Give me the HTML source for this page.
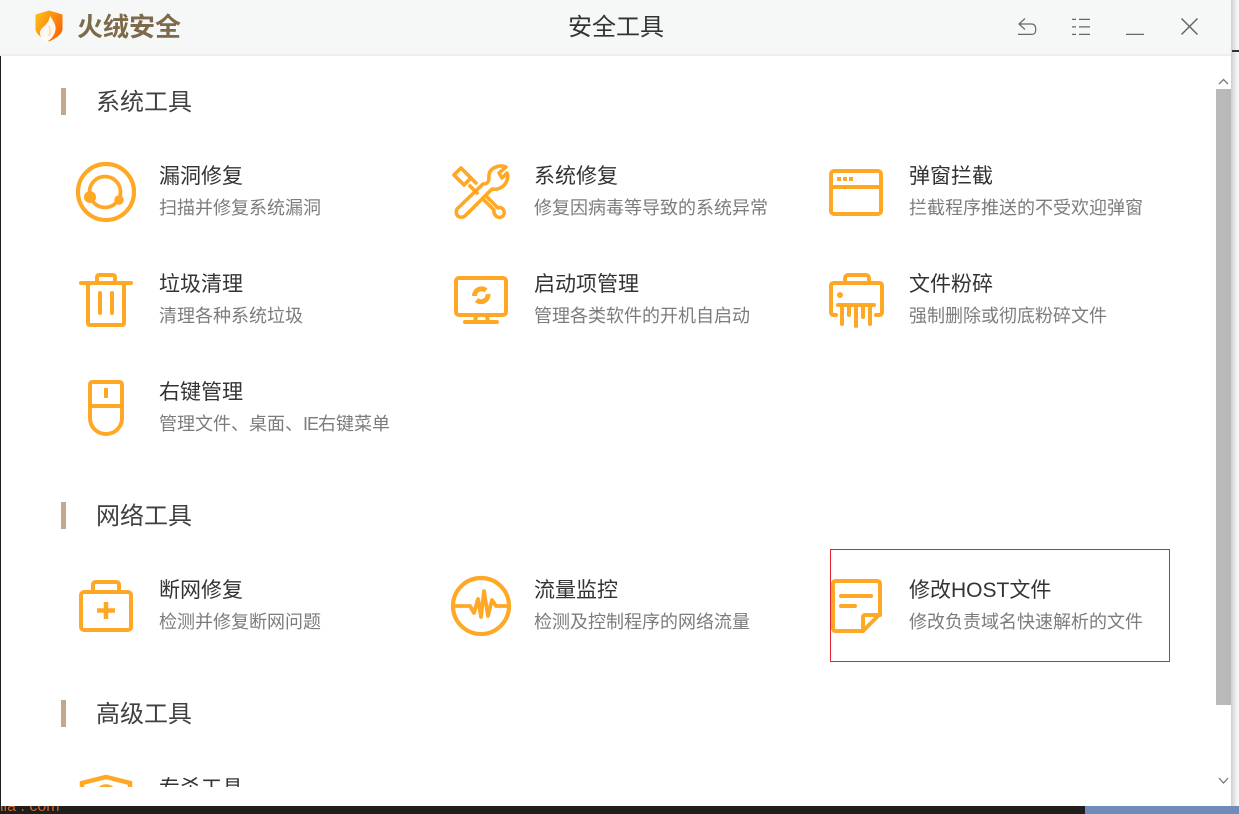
<!DOCTYPE html>
<html lang="zh">
<head>
<meta charset="utf-8">
<style>
html,body{margin:0;padding:0}
body{width:1239px;height:814px;overflow:hidden;position:relative;background:#f4f4f4;font-family:"Liberation Sans","Noto Sans CJK SC",sans-serif}
.a{position:absolute}
.t{position:absolute;white-space:nowrap;line-height:1}
.sec{font-size:24px;color:#404040;left:96px}
.bar{position:absolute;left:61px;width:5px;height:27px;background:#c2a98d}
.h{font-size:21px;color:#333}
.s{font-size:18px;color:#7c7c7c}
svg{position:absolute;left:0;top:0}
</style>
</head>
<body>
<div class="a" style="left:1231px;top:0;width:8px;height:814px;background:linear-gradient(90deg,#d0d0d0,#f2f2f2 70%,#f8f8f8)"></div>
<div class="a" style="left:1232px;top:50px;width:7px;height:2px;background:#333"></div>
<div class="a" style="left:0;top:806px;width:1085px;height:8px;background:#1e1e1e;overflow:hidden"><div class="t" style="left:0;top:-7px;font-size:16px;color:#c8642a">lia . com</div></div>
<div class="a" style="left:1085px;top:806px;width:154px;height:8px;background:#6f8cb8"></div>
<div class="a" style="left:0;top:55px;width:1px;height:751px;background:#1e1e1e"></div>

<div class="a" style="left:0;top:0;width:1231px;height:56px;background:#f6f8f7;box-sizing:border-box"></div>
<div class="a" style="left:0;top:54px;width:1231px;height:2px;background:#eeeeee"></div>
<div class="a" style="left:1px;top:56px;width:1230px;height:750px;background:#fff"></div>

<div class="t" style="left:77px;top:14px;font-size:26px;font-weight:700;color:#7d6a4a">火绒安全</div>
<div class="t" style="left:568px;top:16px;font-size:24px;color:#333">安全工具</div>

<svg width="1239" height="814" viewBox="0 0 1239 814" fill="none">
<defs>
<linearGradient id="lg" x1="0" x2="1" y1="0" y2="0.6"><stop offset="0" stop-color="#ffc21a"/><stop offset="1" stop-color="#fb6a06"/></linearGradient>
</defs>
<!-- logo -->
<path d="M35.500 14.500 L49 10.500 L62.500 14.500 V29 C62.500 34 55 39 49 41.500 C43 39 35.500 34 35.500 29 Z" fill="url(#lg)"/>
<path d="M50 16 C54 22 57 26 55 32 C53.500 37 50 40 47 41.500 C42 39.500 38.500 35 40.500 30.500 C43 26 49 24 50 16 Z" fill="#fff" opacity=".95"/>
<path d="M49 26 C50 30 51 33 48.500 36" stroke="#fdd9a8" stroke-width="1.600"/>

<!-- toolbar icons -->
<g stroke="#666" stroke-width="1.200">
<path d="M1025 18.500 L1019 24 L1025 29.500 M1019 24 H1031.500 C1035 24 1035.700 26.500 1035.700 29.500 C1035.700 32.500 1035 34.400 1031.500 34.400 H1018"/>
<path d="M1072 19.400 H1076 M1079 19.400 H1090 M1072 26.900 H1076 M1079 26.900 H1090 M1072 34.400 H1076 M1079 34.400 H1090"/>
<path d="M1126 34.400 H1144"/>
<path d="M1181.500 18.500 L1197.500 34.500 M1197.500 18.500 L1181.500 34.500" stroke-width="1.500"/>
</g>

<!-- scroll arrows -->
<path d="M1219 84 L1223.500 79.500 L1228 84" stroke="#777" stroke-width="1.300"/>
<path d="M1219 778 L1223.500 783 L1228 778" stroke="#777" stroke-width="1.300"/>

<g stroke="#ffa826" stroke-width="4" stroke-linecap="round" stroke-linejoin="round">
<!-- 漏洞修复 -->
<circle cx="106" cy="192" r="28" stroke-width="4.200"/>
<circle cx="105" cy="192" r="15.500" stroke-width="3.800"/>
<circle cx="90" cy="197" r="6" fill="#ffa826" stroke="none"/>
<circle cx="119" cy="200" r="4.800" fill="#ffa826" stroke="none"/>

<!-- 系统修复 -->
<path d="M454 175 L461 168 L471 178 L464 185 Z" stroke-width="3.700"/>
<path d="M470 186 L477 193 M471 178 L476 183" stroke-width="3.700"/>
<path d="M486 196 L498 208 C502 206 505 211 504 214 C503 218 498 218 496 216 C493 213 494 210 494 210 L483 199" stroke-width="3.500"/>
<path d="M489 176 C489 168 499 164 506 167 L499 173 L502 178 L507 173 C510 180 503 191 492 189 L466 215 C461 220 454 216 457 209 L483 184 C489 184 489 180 489 176 Z" stroke-width="3.600"/>

<!-- 弹窗拦截 -->
<rect x="831" y="171" width="50" height="43" rx="3"/>
<path d="M831 187 H881"/>
<path d="M837 179 H841 M843 179 H847 M849 179 H853" stroke-linecap="butt"/>

<!-- 垃圾清理 -->
<path d="M81 283 H131"/>
<path d="M88 284 V323 C88 324.500 89 325 90 325 H122 C123 325 124 324.500 124 323 V284"/>
<path d="M97 283 V277 C97 275.500 98 275 99 275 H113 C114 275 115 275.500 115 277 V283"/>
<path d="M100 293 V313 M112 293 V313"/>

<!-- 启动项管理 -->
<rect x="456" y="278" width="50" height="37" rx="3"/>
<path d="M476 316 L475 322 M487 316 L488 322"/>
<path d="M465 322 H497"/>
<path d="M474.500 296 A7 7 0 0 1 486 290.500 M488 294 A7 7 0 0 1 476.500 300" stroke-width="5" stroke-linecap="butt"/>

<!-- 文件粉碎 -->
<rect x="845" y="275" width="24" height="14" rx="3"/>
<path d="M836 315 H834 C832 315 831 314 831 312 V286 C831 284 832 283 834 283 H879 C881 283 882 284 882 286 V312 C882 314 881 315 879 315 H876" fill="#fff"/>
<circle cx="840" cy="295" r="3" fill="#ffa826" stroke="none"/>
<path d="M838 305 H874"/>
<path d="M842 306 V324 M849 306 V315 M856 306 V326 M863 306 V317 M870 306 V324"/>

<!-- 右键管理 -->
<path d="M90 407 V385 C90 383 91 382 93 382 H119 C121 382 122 383 122 385 V418 C122 427 115 434 106 434 C97 434 90 427 90 418 Z"/>
<path d="M90 406 H122"/>
<path d="M106 388 V398" stroke-width="4" stroke-linecap="butt"/>

<!-- 断网修复 -->
<rect x="81" y="592" width="50" height="38" rx="3"/>
<path d="M93 592 V585 C93 583 94 582 96 582 H116 C118 582 119 583 119 585 V592"/>
<path d="M106 602 V619 M97 610.500 H115" stroke-width="4.500" stroke-linecap="butt"/>

<!-- 流量监控 -->
<circle cx="481" cy="606" r="28" stroke-width="4.200"/>
<path d="M453 606 H470 L474 613 L478 599 L481 617 L484 591 L488 616 L492 600 L496 606 H509" stroke-width="3.800" stroke-linecap="butt"/>

<!-- 修改HOST -->
<path d="M863 631 H836 C834 631 833 630 833 628 V584 C833 582 834 581 836 581 H877 C879 581 880 582 880 584 V614 L863 631 Z"/>
<path d="M863 631 V618 C863 615 864 615 866 615 H880"/>
<path d="M841 596 H871 M841 606 H855"/>
</g>
</svg>

<div class="bar" style="top:88px"></div>
<div class="t sec" style="top:91px">系统工具</div>
<div class="bar" style="top:502px"></div>
<div class="t sec" style="top:505px">网络工具</div>
<div class="bar" style="top:700px"></div>
<div class="t sec" style="top:703px">高级工具</div>

<div class="t h" style="left:159px;top:166px">漏洞修复</div>
<div class="t s" style="left:159px;top:199px">扫描并修复系统漏洞</div>
<div class="t h" style="left:534px;top:166px">系统修复</div>
<div class="t s" style="left:534px;top:199px">修复因病毒等导致的系统异常</div>
<div class="t h" style="left:909px;top:166px">弹窗拦截</div>
<div class="t s" style="left:909px;top:199px">拦截程序推送的不受欢迎弹窗</div>

<div class="t h" style="left:159px;top:274px">垃圾清理</div>
<div class="t s" style="left:159px;top:307px">清理各种系统垃圾</div>
<div class="t h" style="left:534px;top:274px">启动项管理</div>
<div class="t s" style="left:534px;top:307px">管理各类软件的开机自启动</div>
<div class="t h" style="left:909px;top:274px">文件粉碎</div>
<div class="t s" style="left:909px;top:307px">强制删除或彻底粉碎文件</div>

<div class="t h" style="left:159px;top:382px">右键管理</div>
<div class="t s" style="left:159px;top:415px">管理文件、桌面、<span style="letter-spacing:-1px">IE</span>右键菜单</div>

<div class="t h" style="left:159px;top:580px">断网修复</div>
<div class="t s" style="left:159px;top:613px">检测并修复断网问题</div>
<div class="t h" style="left:534px;top:580px">流量监控</div>
<div class="t s" style="left:534px;top:613px">检测及控制程序的网络流量</div>
<div class="t h" style="left:909px;top:580px">修改HOST文件</div>
<div class="t s" style="left:909px;top:613px">修改负责域名快速解析的文件</div>

<div class="a" style="left:830px;top:549px;width:338px;height:111px;border:1px solid #e8202e"></div>

<!-- clipped row -->
<div class="a" style="left:0;top:770px;width:600px;height:17px;overflow:hidden">
  <div class="t h" style="left:159px;top:8px">专杀工具</div>
  <svg width="200" height="40" viewBox="0 770 200 40" fill="none"><path d="M82 798 V783 L106 777 L130 783 V798" stroke="#ffa826" stroke-width="4.500"/><path d="M99 790 C102 785 110 785 113 790" stroke="#ffa826" stroke-width="4"/></svg>
</div>

<div class="a" style="left:1216px;top:89px;width:15px;height:616px;background:#b9b9b9"></div>
</body>
</html>
